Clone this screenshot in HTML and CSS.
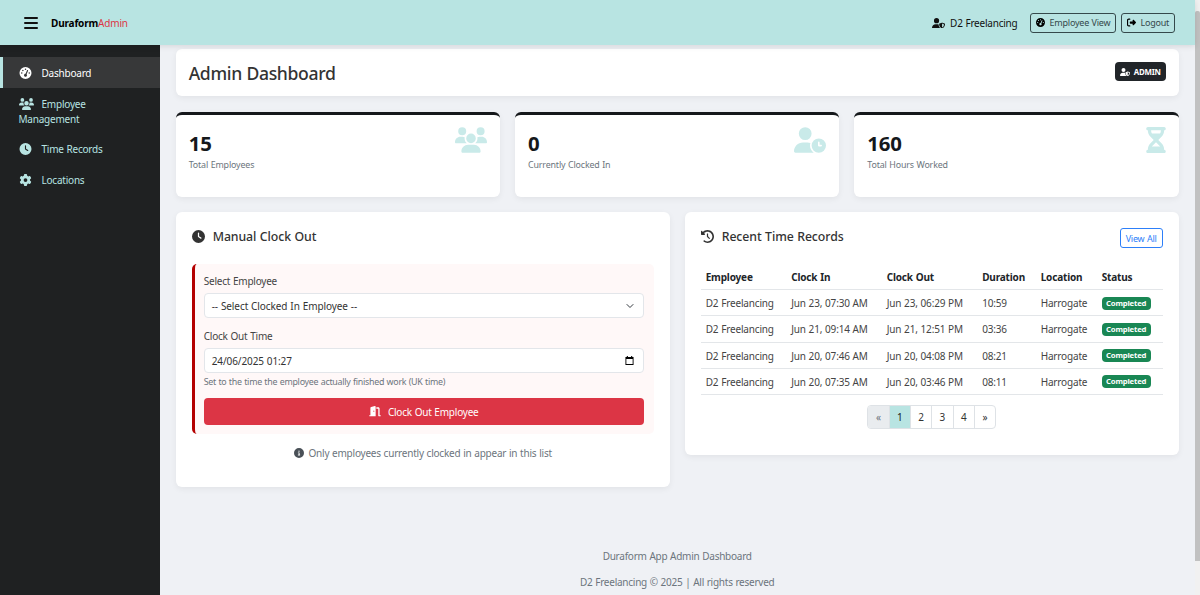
FILE: index.html
```html
<!DOCTYPE html>
<html lang="en">
<head>
<meta charset="utf-8">
<title>Duraform Admin</title>
<link rel="stylesheet" href="styles.css">
</head>
<body>
<svg class="sprite" aria-hidden="true">
  <symbol id="gauge" viewBox="0 0 512 512"><path d="M0 256a256 256 0 1 1 512 0A256 256 0 1 1 0 256zM288 96a32 32 0 1 0 -64 0 32 32 0 1 0 64 0zM256 416c35.3 0 64-28.7 64-64c0-17.4-6.9-33.1-18.1-44.6L366 161.7c5.3-12.1-.2-26.3-12.3-31.6s-26.3 .2-31.6 12.3L257.9 288c-.6 0-1.3 0-1.9 0c-35.3 0-64 28.7-64 64s28.7 64 64 64zM176 144a32 32 0 1 0 -64 0 32 32 0 1 0 64 0zM96 288a32 32 0 1 0 0-64 32 32 0 1 0 0 64zm352-32a32 32 0 1 0 -64 0 32 32 0 1 0 64 0z"/></symbol>
  <symbol id="users" viewBox="0 0 640 512"><path d="M144 0a80 80 0 1 1 0 160A80 80 0 1 1 144 0zM512 0a80 80 0 1 1 0 160A80 80 0 1 1 512 0zM0 298.7C0 239.8 47.8 192 106.7 192h42.7c15.9 0 31 3.5 44.6 9.7c-1.3 7.2-1.9 14.7-1.9 22.3c0 38.2 16.8 72.5 43.3 96H21.3C9.6 320 0 310.4 0 298.7zM405.3 320c26.6-23.5 43.3-57.8 43.3-96c0-7.6-.7-15-1.9-22.3c13.6-6.3 28.7-9.7 44.6-9.7h42.7C592.2 192 640 239.8 640 298.7c0 11.8-9.6 21.3-21.3 21.3H405.3zM224 224a96 96 0 1 1 192 0 96 96 0 1 1 -192 0zM128 485.3C128 411.7 187.7 352 261.3 352H378.7C452.3 352 512 411.7 512 485.3c0 14.7-11.9 26.7-26.7 26.7H154.7c-14.7 0-26.7-11.9-26.7-26.7z"/></symbol>
  <symbol id="clock" viewBox="0 0 512 512"><path d="M256 0a256 256 0 1 1 0 512A256 256 0 1 1 256 0zM232 120V256c0 8 4 15.5 10.7 20l96 64c11 7.4 25.9 4.4 33.3-6.7s4.4-25.9-6.7-33.3L280 243.2V120c0-13.3-10.7-24-24-24s-24 10.7-24 24z"/></symbol>
  <symbol id="gear" viewBox="0 0 512 512"><path d="M495.9 166.6c3.2 8.7 .5 18.4-6.4 24.6l-43.3 39.4c1.1 8.3 1.7 16.8 1.7 25.4s-.6 17.1-1.7 25.4l43.3 39.4c6.9 6.2 9.6 15.9 6.4 24.6c-4.4 11.9-9.7 23.3-15.8 34.3l-4.7 8.1c-6.6 11-14 21.4-22.1 31.2c-5.9 7.2-15.7 9.6-24.5 6.8l-55.7-17.7c-13.4 10.3-28.2 18.9-44 25.4l-12.5 57.1c-2 9.1-9 16.3-18.2 17.8c-13.8 2.3-28 3.5-42.5 3.5s-28.7-1.2-42.5-3.5c-9.2-1.5-16.2-8.7-18.2-17.8l-12.5-57.1c-15.8-6.5-30.6-15.1-44-25.4L83.1 425.9c-8.8 2.8-18.6 .3-24.5-6.8c-8.1-9.8-15.5-20.2-22.1-31.2l-4.7-8.1c-6.1-11-11.4-22.4-15.8-34.3c-3.2-8.7-.5-18.4 6.4-24.6l43.3-39.4C64.6 273.1 64 264.6 64 256s.6-17.1 1.7-25.4L22.4 191.2c-6.9-6.2-9.6-15.9-6.4-24.6c4.4-11.9 9.7-23.3 15.8-34.3l4.7-8.1c6.6-11 14-21.4 22.1-31.2c5.9-7.2 15.7-9.6 24.5-6.8l55.7 17.7c13.4-10.3 28.2-18.9 44-25.4l12.5-57.1c2-9.1 9-16.3 18.2-17.8C227.3 1.2 241.5 0 256 0s28.7 1.2 42.5 3.5c9.2 1.5 16.2 8.7 18.2 17.8l12.5 57.1c15.8 6.5 30.6 15.1 44 25.4l55.7-17.7c8.8-2.8 18.6-.3 24.5 6.8c8.1 9.8 15.5 20.2 22.1 31.2l4.7 8.1c6.1 11 11.4 22.4 15.8 34.3zM256 336a80 80 0 1 0 0-160 80 80 0 1 0 0 160z"/></symbol>
  <symbol id="shield" viewBox="0 0 640 512"><path d="M224 256A128 128 0 1 0 224 0a128 128 0 1 0 0 256zm-45.7 48C79.8 304 0 383.8 0 482.3C0 498.7 13.3 512 29.7 512H418.3c1.8 0 3.5-.2 5.3-.5c-76.3-55.1-99.8-141-103.1-200.2c-16.1-4.8-33.1-7.3-50.7-7.3H178.3zm308.8-78.3l-120 48C358 277.4 352 286.2 352 296c0 63.3 25.9 168.8 134.8 214.2c5.9 2.5 12.6 2.5 18.5 0C614.1 464.8 640 359.3 640 296c0-9.8-6-18.6-15.1-22.3l-120-48c-5.7-2.3-12.1-2.3-17.8 0zM591.4 312c-3.9 50.7-27.2 116.7-95.4 149.7V273.8L591.4 312z"/></symbol>
  <symbol id="logout" viewBox="0 0 512 512"><path d="M377.9 105.9L500.7 228.7c7.2 7.2 11.3 17.1 11.3 27.3s-4.1 20.1-11.3 27.3L377.9 406.1c-6.4 6.4-15 9.9-24 9.9c-18.7 0-33.9-15.2-33.9-33.9l0-62.1-128 0c-17.7 0-32-14.3-32-32l0-64c0-17.7 14.3-32 32-32l128 0 0-62.1c0-18.7 15.2-33.9 33.9-33.9c9 0 17.6 3.6 24 9.9zM160 96L96 96c-17.7 0-32 14.3-32 32l0 256c0 17.7 14.3 32 32 32l64 0c17.7 0 32 14.3 32 32s-14.3 32-32 32l-64 0c-53 0-96-43-96-96L0 128C0 75 43 32 96 32l64 0c17.7 0 32 14.3 32 32s-14.3 32-32 32z"/></symbol>
  <symbol id="user-clock" viewBox="0 0 640 512"><path d="M224 0a128 128 0 1 1 0 256A128 128 0 1 1 224 0zM178.3 304h91.4c20.6 0 40.4 3.5 58.8 9.9C323 331 320 349.1 320 368c0 59.5 29.5 112.1 74.8 144H29.7C13.3 512 0 498.7 0 482.3C0 383.8 79.8 304 178.3 304zM352 368a144 144 0 1 1 288 0 144 144 0 1 1 -288 0zm144-80c-8.8 0-16 7.2-16 16v64c0 8.8 7.2 16 16 16h48c8.8 0 16-7.2 16-16s-7.2-16-16-16H512V304c0-8.8-7.2-16-16-16z"/></symbol>
  <symbol id="hourglass" viewBox="0 0 384 512"><path d="M32 0C14.3 0 0 14.3 0 32S14.3 64 32 64V75c0 42.4 16.9 83.1 46.9 113.1L146.7 256 78.9 323.9C48.9 353.9 32 394.6 32 437v11c-17.7 0-32 14.3-32 32s14.3 32 32 32H64 320h32c17.7 0 32-14.3 32-32s-14.3-32-32-32V437c0-42.4-16.9-83.1-46.9-113.1L237.3 256l67.9-67.9c30-30 46.9-70.7 46.9-113.1V64c17.7 0 32-14.3 32-32s-14.3-32-32-32H320 64 32zM96 75V64H288V75c0 19-5.6 37.4-16 53H112c-10.3-15.6-16-34-16-53zm16 309c3.5-5.3 7.6-10.3 12.1-14.9L192 301.3l67.9 67.9c4.6 4.6 8.6 9.6 12.1 14.9H112z"/></symbol>
  <symbol id="history" viewBox="0 0 512 512"><path d="M75 75L41 41C25.9 25.9 0 36.6 0 57.9V168c0 13.3 10.7 24 24 24H134.1c21.4 0 32.1-25.9 17-41l-30.8-30.8C155 85.5 203 64 256 64c106 0 192 86 192 192s-86 192-192 192c-40.8 0-78.6-12.7-109.7-34.4c-14.5-10.1-34.4-6.6-44.6 7.9s-6.6 34.4 7.9 44.6C151.2 495 201.7 512 256 512c141.4 0 256-114.6 256-256S397.4 0 256 0C185.3 0 121.3 28.7 75 75zm181 53c-13.3 0-24 10.7-24 24V256c0 6.4 2.5 12.5 7 17l72 72c9.4 9.4 24.6 9.4 33.9 0s9.4-24.6 0-33.9l-65-65V152c0-13.3-10.7-24-24-24z"/></symbol>
  <symbol id="door" viewBox="0 0 576 512"><path d="M320 32c0-9.9-4.5-19.2-12.3-25.2S289.8-1.4 280.2 1l-179.9 45C79 51.3 64 70.5 64 92.5V448H32c-17.7 0-32 14.3-32 32s14.3 32 32 32H96 288h32V480 32zM256 256c0 17.7-10.7 32-24 32s-24-14.3-24-32s10.7-32 24-32s24 14.3 24 32zm96-128h96V480c0 17.7 14.3 32 32 32h64c17.7 0 32-14.3 32-32s-14.3-32-32-32H512V128c0-35.3-28.7-64-64-64H352v64z"/></symbol>
  <symbol id="info" viewBox="0 0 512 512"><path d="M256 512A256 256 0 1 0 256 0a256 256 0 1 0 0 512zM216 336h24V272H216c-13.3 0-24-10.7-24-24s10.7-24 24-24h48c13.3 0 24 10.7 24 24v88h8c13.3 0 24 10.7 24 24s-10.7 24-24 24H216c-13.3 0-24-10.7-24-24s10.7-24 24-24zm40-208a32 32 0 1 1 0 64 32 32 0 1 1 0-64z"/></symbol>
</svg>

<div class="page">
  <div class="app">
    <header class="topbar">
      <button class="menu" aria-label="Menu"><span></span><span></span><span></span></button>
      <div class="brand"><b>Duraform</b><span>Admin</span></div>
      <div class="account"><svg class="icon-user"><use href="#shield"/></svg><span>D2 Freelancing</span></div>
      <a class="topbtn topbtn-view"><svg class="icon10"><use href="#gauge"/></svg><span>Employee View</span></a>
      <a class="topbtn topbtn-out"><svg class="icon10"><use href="#logout"/></svg><span>Logout</span></a>
    </header>
    <div class="body">
      <nav class="sidebar">
        <a class="nav active"><svg class="nav-icon"><use href="#gauge"/></svg>Dashboard</a>
        <a class="nav nav-tall"><svg class="nav-icon nav-users"><use href="#users"/></svg>Employee Management</a>
        <a class="nav"><svg class="nav-icon"><use href="#clock"/></svg>Time Records</a>
        <a class="nav"><svg class="nav-icon"><use href="#gear"/></svg>Locations</a>
      </nav>
      <main class="main">
        <section class="card title-card">
          <h1>Admin Dashboard</h1>
          <span class="admin-badge"><svg class="icon-admin"><use href="#shield"/></svg>ADMIN</span>
        </section>
        <div class="stats">
          <section class="card stat"><div><strong>15</strong><p>Total Employees</p></div><svg class="stat-icon"><use href="#users"/></svg></section>
          <section class="card stat"><div><strong>0</strong><p>Currently Clocked In</p></div><svg class="stat-icon"><use href="#user-clock"/></svg></section>
          <section class="card stat"><div><strong>160</strong><p>Total Hours Worked</p></div><svg class="stat-icon stat-narrow"><use href="#hourglass"/></svg></section>
        </div>
        <div class="panels">
          <section class="card panel panel-form">
            <h2><svg class="icon13"><use href="#clock"/></svg><span>Manual Clock Out</span></h2>
            <form class="clockout">
              <label>Select Employee</label>
              <div class="field"><span class="select-text">-- Select Clocked In Employee --</span><svg class="chevron" viewBox="0 0 16 16"><path d="m2 5 6 6 6-6"/></svg></div>
              <label class="label-time">Clock Out Time</label>
              <div class="field field-time"><span class="time-text">24/06/2025 01:27</span><svg class="calendar" viewBox="0 0 9 10"><path d="M1.5 0h1.2v1h3.6V0h1.2v1H9v9H0V1h1.5zM1 3.4V9h7V3.4z" fill-rule="evenodd"/></svg></div>
              <small>Set to the time the employee actually finished work (UK time)</small>
              <div class="submit"><svg class="icon-door"><use href="#door"/></svg><span>Clock Out Employee</span></div>
            </form>
            <p class="note"><svg class="icon10"><use href="#info"/></svg><span>Only employees currently clocked in appear in this list</span></p>
          </section>
          <section class="card panel panel-records">
            <div class="panel-head"><h2><svg class="icon13"><use href="#history"/></svg><span>Recent Time Records</span></h2><a class="view-all">View All</a></div>
            <table>
              <colgroup><col class="c-emp"><col class="c-date"><col class="c-date"><col class="c-dur"><col class="c-loc"><col></colgroup>
              <thead><tr><th>Employee</th><th>Clock In</th><th>Clock Out</th><th>Duration</th><th>Location</th><th>Status</th></tr></thead>
              <tbody>
                <tr><td>D2 Freelancing</td><td>Jun 23, 07:30 AM</td><td>Jun 23, 06:29 PM</td><td>10:59</td><td>Harrogate</td><td><span class="done">Completed</span></td></tr>
                <tr><td>D2 Freelancing</td><td>Jun 21, 09:14 AM</td><td>Jun 21, 12:51 PM</td><td>03:36</td><td>Harrogate</td><td><span class="done">Completed</span></td></tr>
                <tr><td>D2 Freelancing</td><td>Jun 20, 07:46 AM</td><td>Jun 20, 04:08 PM</td><td>08:21</td><td>Harrogate</td><td><span class="done">Completed</span></td></tr>
                <tr><td>D2 Freelancing</td><td>Jun 20, 07:35 AM</td><td>Jun 20, 03:46 PM</td><td>08:11</td><td>Harrogate</td><td><span class="done">Completed</span></td></tr>
              </tbody>
            </table>
            <div class="pager"><span class="off">«</span><span class="on">1</span><span>2</span><span>3</span><span>4</span><span>»</span></div>
          </section>
        </div>
        <footer><p>Duraform App Admin Dashboard</p><p class="copy">D2 Freelancing © 2025 | All rights reserved</p></footer>
      </main>
    </div>
  </div>
  <div class="scrollbar"><div class="thumb"></div></div>
</div>
</body>
</html>
```
FILE: styles.css
```css
* { box-sizing: border-box; }
body { margin: 0; font-family: "Noto Sans", "Open Sans", sans-serif; font-size: 10px; letter-spacing: -0.22px; word-spacing: .4px; color: #333; background: #eff1f5; overflow: hidden; }
h1, h2, p { margin: 0; font-weight: 500; }
svg { fill: currentColor; flex: none; }
.sprite { display: none; }
.page { display: flex; height: 595px; }
.app { flex: 1; display: flex; flex-direction: column; }
.scrollbar { width: 5px; background: #f1f1f1; padding-top: 11px; }
.thumb { height: 550px; background: #c1c1c1; border-radius: 2px 2px 0 0; }

.topbar { height: 44.5px; background: #b8e4e2; display: flex; align-items: center; padding: 1px 20px 0 24px; color: #111; box-shadow: 0 1px 6px rgba(0,0,0,.12); position: relative; z-index: 1; white-space: nowrap; }
.menu { width: 14px; padding: 0; border: 0; background: none; display: flex; flex-direction: column; gap: 3px; margin-right: 13px; }
.menu span { height: 2px; background: #111; border-radius: 1px; }
.brand { flex: 1; color: #000; letter-spacing: -.17px; }
.brand span { color: #dc3545; }
.account { display: flex; align-items: center; gap: 5px; margin-right: 12.5px; }
.icon-user { width: 13px; height: 10.5px; }
.icon10 { width: 10px; height: 10px; }
.topbtn { display: flex; align-items: center; height: 20px; border: 1px solid #35494b; border-radius: 3px; padding: 0 5px; font-size: 9px; color: #35494b; }
.topbtn svg { color: #000; width: 9px; height: 9px; }
.topbtn-view { width: 86px; gap: 4.5px; margin-right: 4.5px; }
.topbtn-out { width: 54.5px; gap: 5px; }

.body { flex: 1; display: flex; min-height: 0; }
.sidebar { width: 160px; background: #1f2122; padding-top: 12.5px; }
.nav { display: block; height: 30.7px; padding: 8.5px 12px 0 15.5px; border-left: 3px solid transparent; color: #b8e4e2; line-height: 15.3px; }
.nav-tall { height: 46px; padding-top: 9px; }
.nav.active { background: #373839; border-left-color: #b8e4e2; color: #fff; }
.nav-icon { width: 13px; height: 12px; margin-right: 10px; vertical-align: -2px; }
.nav-users { width: 15px; margin-right: 8px; }

.main { flex: 1; padding: 4px 16.3px 0 15.7px; display: flex; flex-direction: column; }
.card { background: #fff; border-radius: 6px; box-shadow: 0 2px 6px rgba(0,0,0,.06); }
.title-card { height: 47.5px; display: flex; align-items: center; justify-content: space-between; padding: 0 13px; }
h1 { font-size: 17.6px; letter-spacing: -.35px; padding-top: 1px; }
.admin-badge { display: flex; align-items: center; justify-content: center; gap: 4px; width: 51px; height: 19px; border-radius: 4px; background: #212529; color: #fff; font-size: 7.9px; font-weight: 700; margin-bottom: 1px; }
.icon-admin { width: 10px; height: 8px; }
.stats { display: grid; grid-template-columns: repeat(3, 1fr); gap: 15px; margin-top: 15.5px; }
.stat { height: 85px; border-top: 3px solid #15181b; padding: 12px 13px; display: flex; justify-content: space-between; }
.stat strong { display: block; margin-top: 3px; font-size: 20.4px; line-height: 27px; color: #15181b; }
.stat p { font-size: 8.9px; font-weight: 400; line-height: 13px; margin-top: 1px; color: #6c757d; letter-spacing: -.15px; }
.stat-icon { width: 32px; height: 26px; color: #c9eae9; }
.stat-narrow { width: 20px; }

.panels { display: grid; grid-template-columns: 1fr 1fr; gap: 15px; align-items: start; margin-top: 15px; }
.panel { padding: 16px; }
.panel-form { height: 275px; }
.panel-records { height: 243.5px; }
h2 { display: flex; align-items: center; gap: 8px; font-size: 12.3px; line-height: 17px; height: 17px; letter-spacing: -.08px; }
.icon13 { width: 13px; height: 13px; }
.clockout { margin-top: 19px; height: 170.5px; padding: 10px 10px 0 9px; background: #fff8f8; border-left: 3px solid #b40000; border-radius: 5px; }
.clockout label { display: block; line-height: 15px; color: #444; }
.field { margin-top: 4.5px; height: 24.5px; border: 1px solid #e3e6ea; border-radius: 4px; background: #fff; display: flex; align-items: center; justify-content: space-between; padding: 1px 8.5px 0 7px; }
.select-text { letter-spacing: -.08px; }
.time-text { letter-spacing: -.1px; }
.field-time { padding-right: 9px; }
.clockout .label-time { margin-top: 11px; }
.chevron { width: 8px; height: 8px; fill: none; stroke: #343a40; stroke-width: 2; stroke-linecap: round; stroke-linejoin: round; }
.calendar { width: 9px; height: 9px; color: #000; }
small { display: block; font-size: 8.9px; line-height: 13px; margin-top: 2px; color: #6c757d; letter-spacing: -.27px; }
.submit { height: 27px; margin-top: 10.5px; border-radius: 4px; background: #dc3545; color: #fff; display: flex; align-items: center; justify-content: center; gap: 7px; }
.icon-door { width: 12px; height: 10.5px; }
.note { margin-top: 11.5px; line-height: 15px; display: flex; justify-content: center; align-items: center; gap: 5px; color: #6c757d; font-weight: 400; }
.note svg { color: #495057; }

.panel-head { display: flex; justify-content: space-between; align-items: flex-start; }
.view-all { width: 43px; height: 20px; border: 1px solid #2d7ff9; border-radius: 3px; color: #2d7ff9; font-size: 9px; line-height: 19px; text-align: center; margin-top: .5px; }
table { width: 462px; margin-top: 16px; table-layout: fixed; border-collapse: separate; border-spacing: 0; white-space: nowrap; }
.c-emp { width: 85.5px; } .c-date { width: 95.5px; } .c-dur { width: 58.5px; } .c-loc { width: 61px; }
th, td { height: 26.2px; padding: 1px 5px 0; text-align: left; border-bottom: 1px solid #e3e6e9; color: #444; letter-spacing: -.17px; }
th { color: #212529; font-weight: 700; }
.done { display: block; width: 49px; height: 13px; border-radius: 4px; background: #198754; color: #fff; font-size: 7.7px; font-weight: 700; line-height: 13px; text-align: center; }
.pager { display: flex; width: 129px; height: 24.5px; margin: 10px auto 0; border: 1px solid #dee2e6; border-radius: 4px; overflow: hidden; }
.pager span { flex: 1; line-height: 23px; text-align: center; border-right: 1px solid #dee2e6; }
.pager span:last-child { border: 0; }
.pager .off { background: #e9ecef; color: #6c757d; }
.pager .on { background: #b8e4e2; color: #15181b; }

footer { margin-top: 62px; text-align: center; line-height: 15px; color: #6c757d; letter-spacing: -.25px; }
.copy { margin-top: 11px; }
footer p { font-weight: 400; }
```
